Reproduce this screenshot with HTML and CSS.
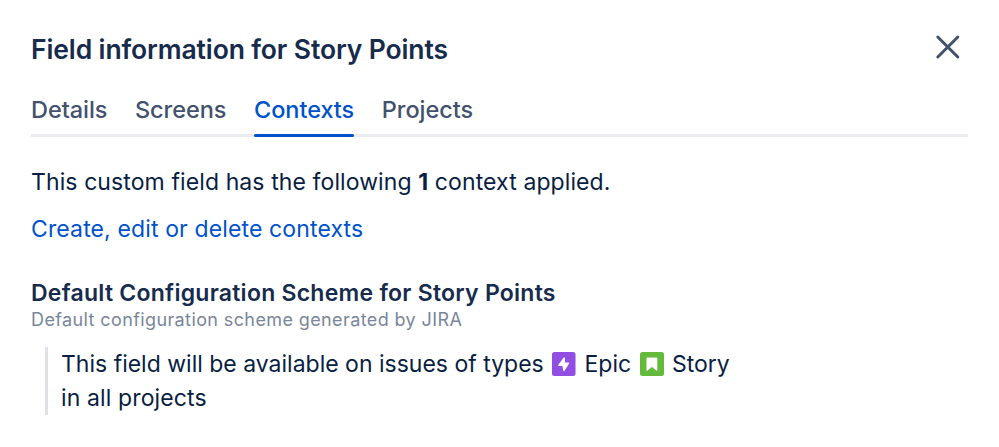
FILE: index.html
```html
<!DOCTYPE html>
<html lang="en">
<head>
<meta charset="utf-8">
<title>Field information</title>
<link rel="stylesheet" href="styles.css">
</head>
<body>
<main class="dialog">
  <header class="header">
    <h1 class="title">Field information for Story Points</h1>
    <button class="close" aria-label="Close"><svg width="26" height="26" viewBox="0 0 26 26"><path d="M2.8 3L22.8 23M22.8 3L2.8 23"/></svg></button>
  </header>
  <nav class="tabs">
    <a class="tab">Details</a>
    <a class="tab">Screens</a>
    <a class="tab active">Contexts</a>
    <a class="tab">Projects</a>
  </nav>
  <p class="intro">This custom field has the following <b>1</b> context applied.</p>
  <a class="link">Create, edit or delete contexts</a>
  <h2 class="scheme">Default Configuration Scheme for Story Points</h2>
  <p class="description">Default configuration scheme generated by JIRA</p>
  <div class="scope">
    <div class="types">
      <span class="lead">This field will be available on issues of types</span>
      <svg class="icon" viewBox="0 0 24 24"><rect width="23.5" height="24" rx="2.5" fill="#904ee2"/><path d="M12.2 5.9L6.7 13.3H10.8L11.9 18.6L16.6 11.2H12.5Z" fill="#fff" stroke="#fff" stroke-width="1.2" stroke-linejoin="round"/></svg>
      <span>Epic</span>
      <svg class="icon" viewBox="0 0 24 24"><rect width="24" height="24" rx="2.5" fill="#63ba3c"/><path d="M6.9 5.9H16.9V18.6L11.9 14.6L6.9 18.6Z" fill="#fff" stroke="#fff" stroke-width=".8" stroke-linejoin="round"/></svg>
      <span>Story</span>
    </div>
    <div class="where">in all projects</div>
  </div>
</main>
</body>
</html>
```
FILE: styles.css
```css
* { box-sizing: border-box; }
body { margin: 0; background: #fff; color: #172b4d; font-family: Inter, sans-serif; font-size: 23px; }
h1, h2, p { margin: 0; white-space: nowrap; }
.dialog { padding: 30px 31px 0; height: 447px; overflow: hidden; }
.header { display: flex; justify-content: space-between; height: 60px; }
.title { font-size: 26.5px; line-height: 39px; font-weight: 600; letter-spacing: -.12px; }
.close { border: 0; background: none; padding: 0; width: 26px; height: 26px; margin: 4px 7px 0 0; }
.close svg { display: block; stroke: #42526e; stroke-width: 3; stroke-linecap: round; }
.tabs { display: flex; gap: 27.5px; height: 47px; border-bottom: 3px solid #ebecf0; }
.tab { height: 47px; line-height: 40px; font-size: 23.5px; font-weight: 500; color: #42526e; letter-spacing: -.04px; }
.active { position: relative; color: #0052cc; }
.active::after { content: ""; position: absolute; left: 0; right: 0; bottom: 0; height: 3px; border-radius: 2px; background: #0052cc; }
.intro { margin-top: 28px; line-height: 34px; color: #091e42; letter-spacing: .1px; }
.link { display: block; width: max-content; margin-top: 13px; line-height: 34px; color: #0052cc; letter-spacing: .13px; }
.scheme { margin-top: 31px; font-size: 23px; line-height: 32px; font-weight: 600; letter-spacing: .25px; }
.description { font-size: 18px; line-height: 22px; color: #7a869a; letter-spacing: .39px; }
.scope { margin: 16px 0 0 14px; padding-left: 13px; border-left: 3px solid #dfe1e6; height: 68px; line-height: 34px; color: #091e42; }
.types { display: flex; align-items: center; gap: 8.4px; }
.icon { width: 24px; height: 24px; flex: none; }
.lead { letter-spacing: 0; }
.where { letter-spacing: .13px; }
```
